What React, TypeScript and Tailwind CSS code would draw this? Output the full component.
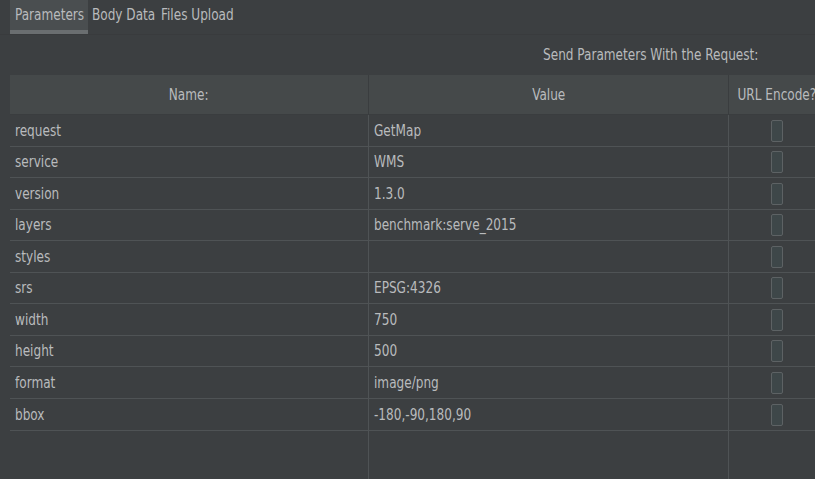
import React from "react";

const rows: [string, string][] = [
  ["request", "GetMap"],
  ["service", "WMS"],
  ["version", "1.3.0"],
  ["layers", "benchmark:serve_2015"],
  ["styles", ""],
  ["srs", "EPSG:4326"],
  ["width", "750"],
  ["height", "500"],
  ["format", "image/png"],
  ["bbox", "-180,-90,180,90"],
];

const heights = [
  "h-[32px]",
  "h-[31px]",
  "h-[32px]",
  "h-[31px]",
  "h-[32px]",
  "h-[31px]",
  "h-[32px]",
  "h-[31px]",
  "h-[32px]",
  "h-[32px]",
];

function T({ children, origin }: { children: React.ReactNode; origin?: "center" | "right" }) {
  return (
    <span
      className={
        "inline-block whitespace-nowrap scale-x-[0.84] " +
        (origin === "center" ? "origin-center" : origin === "right" ? "origin-right" : "origin-left")
      }
    >
      {children}
    </span>
  );
}

export default function App() {
  return (
    <div
      className="w-[815px] h-[479px] bg-[#3c3f41] overflow-hidden flex flex-col text-[16px] leading-none text-[#b9bbbd]"
      style={{ fontFamily: '"DejaVu Sans Condensed", "DejaVu Sans", sans-serif', fontStretch: "condensed" }}
    >
      {/* Tabs */}
      <div className="h-[35px] shrink-0 flex pl-[10px] border-b border-[#393b3d]">
        <div className="relative w-[78px] h-full bg-[#4a4e50] flex items-start pt-[7px] pl-[5px]">
          <T>Parameters</T>
          <div className="absolute left-0 right-0 bottom-0 h-[4px] bg-[#6a6e70]" />
        </div>
        <div className="pl-[4px] pt-[7px] w-[73px] overflow-visible">
          <T>Body Data</T>
        </div>
        <div className="pt-[7px]">
          <T>Files Upload</T>
        </div>
      </div>

      {/* Send parameters label */}
      <div className="h-[40px] shrink-0 flex items-center justify-end pr-[57px]">
        <T origin="right">Send Parameters With the Request:</T>
      </div>

      {/* Table */}
      <div className="ml-[10px] w-[815px] flex-1 flex flex-col">
        <div className="h-[40px] shrink-0 bg-[#45494a] grid grid-cols-[359px_360px_96px] border-b border-[#3a3d3f]">
          <div className="flex items-center justify-center border-r border-[#3a3d3f]">
            <T origin="center">Name:</T>
          </div>
          <div className="flex items-center justify-center border-r border-[#3a3d3f]">
            <T origin="center">Value</T>
          </div>
          <div className="flex items-center justify-center">
            <T origin="center">URL Encode?</T>
          </div>
        </div>
        {rows.map(([n, v], i) => (
          <div
            key={n}
            className={heights[i] + " shrink-0 grid grid-cols-[359px_360px_96px] border-b border-[#4f5355]"}
          >
            <div className="flex items-center pl-[5px] border-r border-[#4f5355]">
              <T>{n}</T>
            </div>
            <div className="flex items-center pl-[5px] border-r border-[#4f5355]">
              <T>{v}</T>
            </div>
            <div className="flex items-center justify-center">
              <div className="w-[12px] h-[22px] rounded-[2px] border border-[#5d6264] bg-[#3e4749]" />
            </div>
          </div>
        ))}
        <div className="flex-1 grid grid-cols-[359px_360px_96px]">
          <div className="border-r border-[#4f5355]" />
          <div className="border-r border-[#4f5355]" />
          <div />
        </div>
      </div>
    </div>
  );
}
